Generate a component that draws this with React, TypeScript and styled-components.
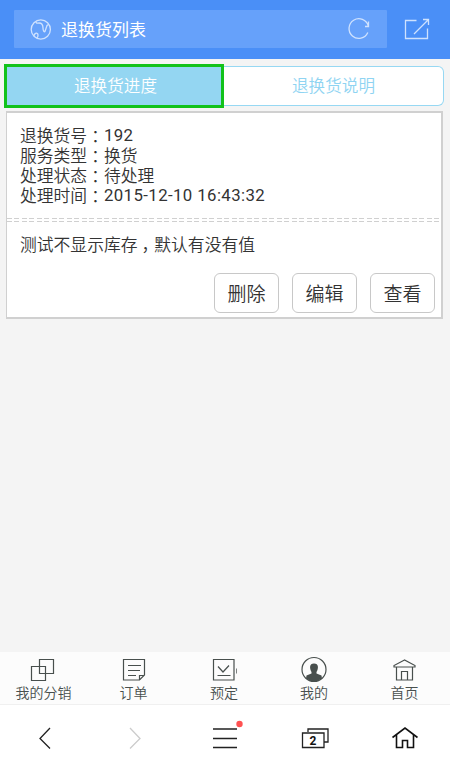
import React from "react";
import styled, { createGlobalStyle } from "styled-components";

const Global = createGlobalStyle`
  * { box-sizing: border-box; }
  body { margin: 0; background: #f4f4f4; font-family: Roboto, "Noto Sans CJK SC", sans-serif; color: #333; }
  button { font: inherit; color: inherit; margin: 0; padding: 0; }
`;

const cjk = `font-family: "Noto Sans CJK SC", sans-serif; font-weight: 350;`;

const Page = styled.div`
  width: 450px; height: 770px; display: flex; flex-direction: column;
  background: #f4f4f4; overflow: hidden;
`;
const Header = styled.header`
  flex: none; height: 59px; padding: 10px 21px 11px 14px; background: #4a8ff7;
  display: flex; align-items: center; justify-content: space-between;
`;
const AddressBar = styled.div`
  width: 373px; height: 38px; padding: 0 17px 0 16px; background: #66a1fa; border-radius: 1px;
  display: flex; align-items: center; color: #fff;
`;
const PageTitle = styled.h1`
  flex: 1; margin: 2px 0 0 10px; font-size: 17px; line-height: 24px; font-weight: 400;
`;
const Icon = styled.svg<{ $color?: string }>`
  display: block; flex: none; fill: none; overflow: visible;
  stroke: ${(p) => p.$color ?? "currentColor"};
`;
const HeaderIcon = styled(Icon)` color: #cfe2fe; stroke-width: 1.3; `;
const Content = styled.main` flex: 1; padding: 5px 6px 0 4px; `;
const Tabs = styled.nav` display: flex; height: 44px; align-items: center; `;
const Tab = styled.button<{ $active?: boolean }>`
  height: ${(p) => (p.$active ? 44 : 40)}px;
  width: 220px;
  border: ${(p) => (p.$active ? "3px solid #12c21b" : "1px solid #97d8f3")};
  border-left-width: ${(p) => (p.$active ? 3 : 0)}px;
  border-radius: ${(p) => (p.$active ? "0" : "0 6px 6px 0")};
  background: ${(p) => (p.$active ? "#94d6f2" : "#fff")};
  color: ${(p) => (p.$active ? "#fff" : "#8fd4f2")};
  padding: 0 0 2px ${(p) => (p.$active ? 3 : 0)}px;
  ${cjk}
  font-size: 16.6px; line-height: 24px;
`;
const Card = styled.section`
  margin: 3px 1px 0 2px; height: 208px; background: #fff;
  border: solid #d0d0d0; border-width: 2px 2px 2px 1px;
`;
const Details = styled.div`
  height: 105px; padding: 12px 13px 0; font-size: 16.8px; line-height: 20px; ${cjk}
`;
const DetailRow = styled.div` display: flex; height: 20px; `;
const Punctuation = styled.span`
  display: inline-block; width: 1em; height: 20px; padding-left: 0.24em;
  font-feature-settings: "halt"; line-height: 20px; vertical-align: top;
`;
const Value = styled.span<{ $numeric: boolean }>`
  ${(p) => p.$numeric && "font-family: Roboto, sans-serif; font-weight: 400; letter-spacing: 0.4px;"}
`;
const Divider = styled.div`
  height: 4px;
  background:
    linear-gradient(#fff, #fff) 0 1px / 100% 2px no-repeat,
    repeating-linear-gradient(90deg, #d0d0d0 0 5px, #fff 5px 7.5px);
`;
const Note = styled.p`
  margin: 12px 13px 17px; height: 22px; font-size: 16.8px; line-height: 20px; ${cjk}
`;
const Actions = styled.div` display: flex; justify-content: flex-end; gap: 13px; padding-right: 6px; `;
const Action = styled.button`
  width: 65px; height: 40px; background: #fff; border: 1px solid #c8c8c8; border-radius: 6px;
  ${cjk}
  font-size: 19px; line-height: 28px; padding-bottom: 1px;
`;
const ShopNav = styled.nav`
  flex: none; height: 53px; background: #fcfcfc; border-bottom: 1px solid #f0f0f0;
  display: grid; grid-template-columns: 87px 93px 88px 92px 89px;
`;
const ShopItem = styled.a`
  display: flex; flex-direction: column; align-items: center; padding-top: 5px;
  ${cjk}
  font-size: 14px; line-height: 20px; color: #484f4d;
`;
const ShopLabel = styled.span` height: 18px; line-height: 18px; `;
const BrowserNav = styled.nav`
  flex: none; height: 65px; background: #fff; display: grid;
  grid-template-columns: repeat(5, 90px); justify-items: center; align-items: center;
`;
const BrowserButton = styled.button`
  border: 0; background: none; color: #222; width: 40px; height: 40px;
  display: flex; align-items: center; justify-content: center;
`;
const TabCount = styled.text`
  font: 700 12px Roboto, sans-serif; fill: #111; stroke: none;
`;

const info: { label: string; value: string; numeric: boolean }[] = [
  { label: "退换货号", value: "192", numeric: true },
  { label: "服务类型", value: "换货", numeric: false },
  { label: "处理状态", value: "待处理", numeric: false },
  { label: "处理时间", value: "2015-12-10 16:43:32", numeric: true },
];

const shopItems: { label: string; icon: React.ReactNode }[] = [
  { label: "我的分销", icon: <path d="M8.500 2.500h14v14h-14zM.500 9.500h14v14h-14z" /> },
  { label: "订单", icon: <path d="M2.500 2.500h21v15.500l-5 5h-16zM18.500 23v-4.500h5M7 8.500h13M7 13.500h12M7 18.500h8" /> },
  {
    label: "预定",
    icon: (
      <>
        <path d="M2.500 2.500h20.500v20.500h-20.500zM7 9.500l5 5.500 6-6.500M6.500 18.500h13" />
        <path d="M25.500 11.500v5" strokeWidth="0.700" />
      </>
    ),
  },
  {
    label: "我的",
    icon: (
      <>
        <circle cx="13" cy="12.500" r="12" />
        <path d="M13 6.500c-5 0-4.500 5-2.500 8.500v1.500l-5 2-.5 3q8 6 16 0l-.5-3-5-2v-1.500c2-3.500 2.500-8.500-2.500-8.500z" fill="currentColor" stroke="none" />
      </>
    ),
  },
  { label: "首页", icon: <path d="M12.500 3 2 8.500v1.500h21v-1.500zM4.500 10v13h16v-13M9.500 23v-8.500h6v8.500" /> },
];

export default function App() {
  return (
    <Page>
      <Global />
      <Header>
        <AddressBar>
          <HeaderIcon width="21" height="21" viewBox="0 0 21 21">
            <circle cx="10.800" cy="10.500" r="9.600" />
            <path d="M6 2.500c0 2 1 1.500 3 1.500 4 0 4 3 4 5s1 4.500 2 3.500l2-6 1.500-1M4 17c0-3 4-4 4-1s-1 2-1 3" />
          </HeaderIcon>
          <PageTitle>退换货列表</PageTitle>
          <HeaderIcon width="22" height="22" viewBox="0 0 22 22">
            <path d="M20.300 8a9.800 9.800 0 1 0-.500 6.500M20.500 3.500v5h-3.500" />
          </HeaderIcon>
        </AddressBar>
        <HeaderIcon width="24" height="20" viewBox="0 0 24 20">
          <path d="M11.500 1.500H.500v18h22v-10M9 15 23.500.500M18 .500h5.500v5.500" />
        </HeaderIcon>
      </Header>
      <Content>
        <Tabs>
          <Tab $active>退换货进度</Tab>
          <Tab>退换货说明</Tab>
        </Tabs>
        <Card>
          <Details>
            {info.map(({ label, value, numeric }) => (
              <DetailRow key={label}>
                {label}
                <Punctuation>：</Punctuation>
                <Value $numeric={numeric}>{value}</Value>
              </DetailRow>
            ))}
          </Details>
          <Divider />
          <Note>
            测试不显示库存<Punctuation>，</Punctuation>默认有没有值
          </Note>
          <Actions>
            <Action>删除</Action>
            <Action>编辑</Action>
            <Action>查看</Action>
          </Actions>
        </Card>
      </Content>
      <ShopNav>
        {shopItems.map((item) => (
          <ShopItem key={item.label}>
            <Icon width="26" height="26" viewBox="0 0 26 26" strokeWidth="1.200">
              {item.icon}
            </Icon>
            <ShopLabel>{item.label}</ShopLabel>
          </ShopItem>
        ))}
      </ShopNav>
      <BrowserNav>
        <BrowserButton>
          <Icon width="12" height="22" viewBox="0 0 12 22" strokeWidth="1.300"><path d="M11 1 1 11.500l10 10" /></Icon>
        </BrowserButton>
        <BrowserButton>
          <Icon width="12" height="22" viewBox="0 0 12 22" strokeWidth="1.300" $color="#ccc"><path d="m1 1 10 10.500-10 10" /></Icon>
        </BrowserButton>
        <BrowserButton>
          <Icon width="24" height="22" viewBox="0 0 24 22" strokeWidth="1.300">
            <path d="M0 2h24M0 11.500h24M0 20.500h24" />
            <circle cx="26.500" cy="-3" r="3.200" fill="#ff5151" stroke="none" />
          </Icon>
        </BrowserButton>
        <BrowserButton>
          <Icon width="26" height="20" viewBox="0 0 26 20" strokeWidth="1.300">
            <path d="M6 4V1h20v13h-4M.500 5h21.500v14.500H.500z" />
            <TabCount x="7.500" y="16.500">2</TabCount>
          </Icon>
        </BrowserButton>
        <BrowserButton>
          <Icon width="26" height="22" viewBox="0 0 26 22" strokeWidth="1.600" $color="#111">
            <path d="M.500 10.500 13 1 25.500 10.500M4.500 8v12.500h6v-7h5v7h6v-12.500" />
          </Icon>
        </BrowserButton>
      </BrowserNav>
    </Page>
  );
}
